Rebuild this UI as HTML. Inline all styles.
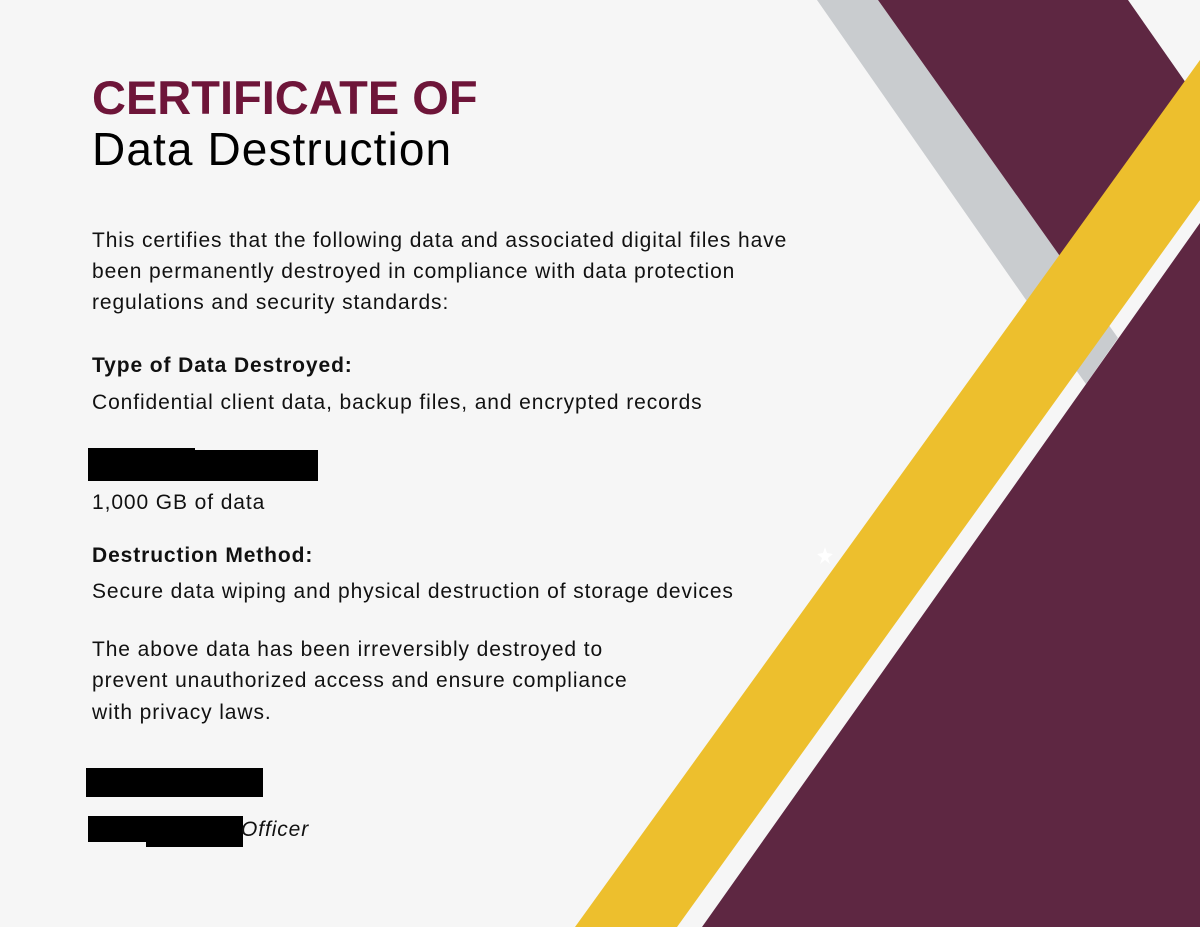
<!DOCTYPE html>
<html><head><meta charset="utf-8"><style>
html,body{margin:0;padding:0}
body{width:1200px;height:927px;background:#f6f6f6;position:relative;overflow:hidden;font-family:"Liberation Sans",sans-serif;color:#111}
svg{position:absolute;left:0;top:0}
.t{position:absolute;left:92px;white-space:nowrap;font-size:21px;letter-spacing:0.9px}
.b{font-weight:bold}
.k{position:absolute;background:#000}
</style></head><body>
<svg width="1200" height="927" viewBox="0 0 1200 927">
<polygon points="817,0 878,0 1118,338 1086,384 1040,320" fill="#c9cccf"/>
<polygon points="878,0 1128,0 1200,103 1200,200 1079,283" fill="#5e2742"/>
<polygon points="702,927 1200,223 1200,927" fill="#5e2742"/>
<polygon points="1200,60 1200,200 677,927 575,927" fill="#edbf2d"/>
<polygon points="825,547 827,553 833,554 828,558 830,564 825,560 820,564 822,558 817,554 823,553" fill="#fff"/>
</svg>
<div class="t b" style="top:70px;font-size:47px;color:#6e1539;letter-spacing:0">CERTIFICATE OF</div>
<div class="t" style="top:122px;font-size:46px;color:#000;letter-spacing:1.1px">Data Destruction</div>
<div class="t" style="top:229px">This certifies that the following data and associated digital files have</div>
<div class="t" style="top:260px">been permanently destroyed in compliance with data protection</div>
<div class="t" style="top:291px">regulations and security standards:</div>
<div class="t b" style="top:354px">Type of Data Destroyed:</div>
<div class="t" style="top:391px">Confidential client data, backup files, and encrypted records</div>
<div class="k" style="left:88px;top:450px;width:230px;height:31px"></div>
<div class="k" style="left:88px;top:448px;width:107px;height:4px"></div>
<div class="t" style="top:491px">1,000 GB of data</div>
<div class="t b" style="top:544px">Destruction Method:</div>
<div class="t" style="top:580px">Secure data wiping and physical destruction of storage devices</div>
<div class="t" style="top:638px">The above data has been irreversibly destroyed to</div>
<div class="t" style="top:669px">prevent unauthorized access and ensure compliance</div>
<div class="t" style="top:701px">with privacy laws.</div>
<div class="k" style="left:86px;top:768px;width:177px;height:29px"></div>
<div class="k" style="left:88px;top:816px;width:155px;height:26px"></div>
<div class="k" style="left:146px;top:830px;width:97px;height:17px"></div>
<div class="t" style="left:241px;top:818px;font-style:italic">Officer</div>
</body></html>
